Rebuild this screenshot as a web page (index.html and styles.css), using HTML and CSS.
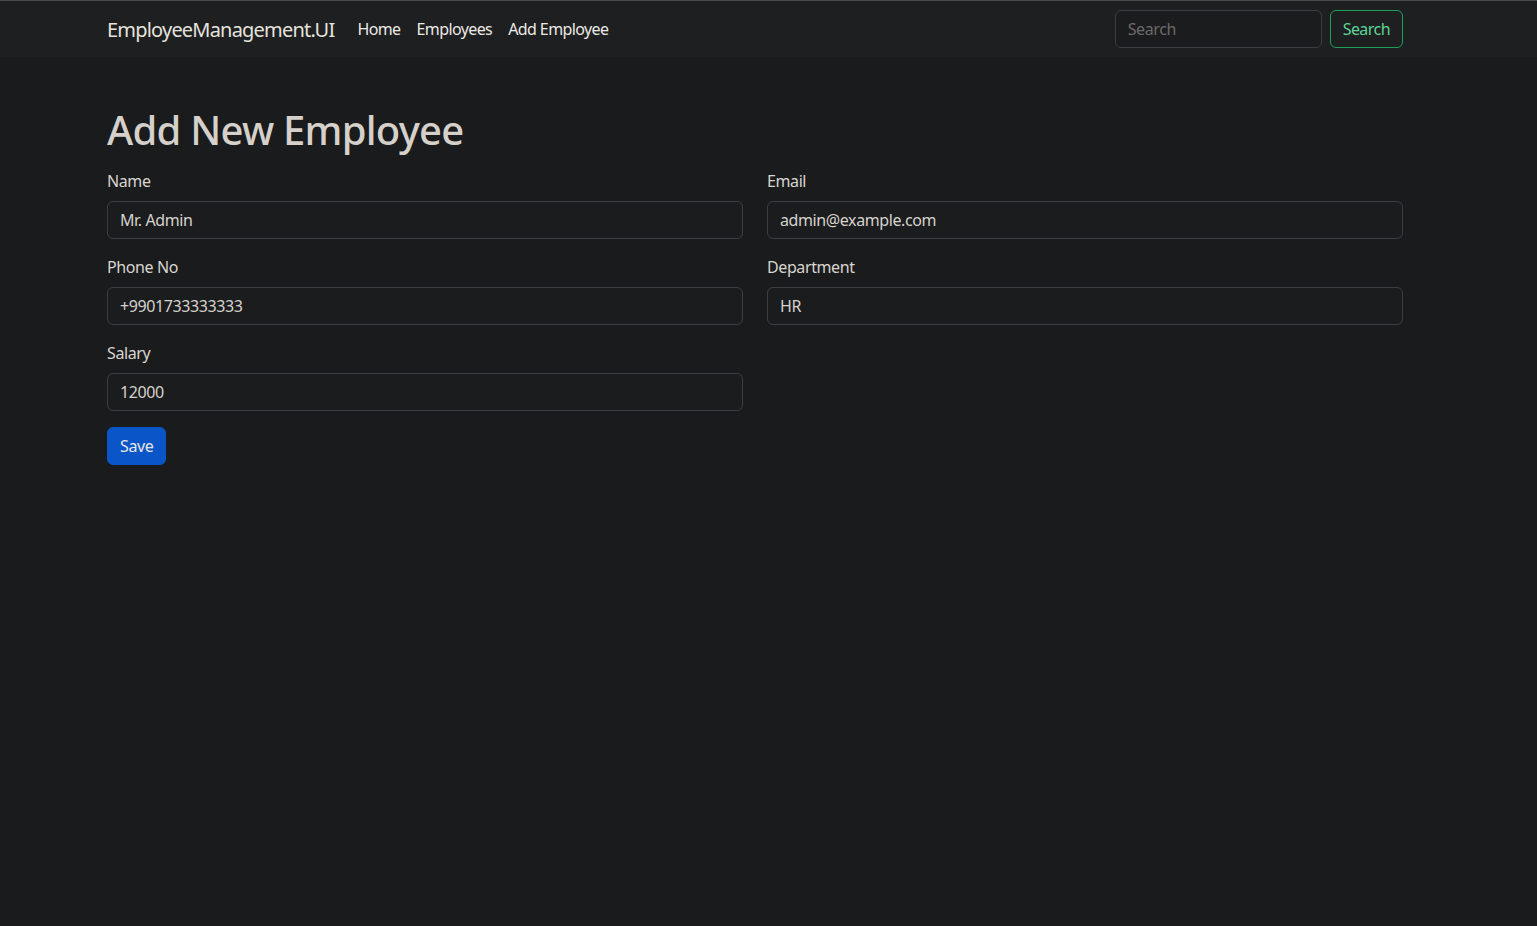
FILE: index.html
```html
<!DOCTYPE html>
<html lang="en">
<head>
<meta charset="utf-8">
<title>EmployeeManagement.UI</title>
<link rel="stylesheet" href="styles.css">
</head>
<body>
<nav class="navbar">
  <div class="nav-inner">
    <a class="brand" href="#">EmployeeManagement.UI</a>
    <ul class="nav-links">
      <li><a href="#">Home</a></li>
      <li><a href="#">Employees</a></li>
      <li><a href="#">Add Employee</a></li>
    </ul>
    <form class="search">
      <input class="search-input" type="search" placeholder="Search">
      <button class="btn-search" type="button">Search</button>
    </form>
  </div>
</nav>
<main class="container">
  <h1 class="title">Add New Employee</h1>
  <form class="emp-form">
    <div class="grid">
      <div class="field">
        <label class="label">Name</label>
        <input class="input" type="text" value="Mr. Admin">
      </div>
      <div class="field">
        <label class="label">Email</label>
        <input class="input" type="text" value="admin@example.com">
      </div>
      <div class="field">
        <label class="label">Phone No</label>
        <input class="input" type="text" value="+9901733333333">
      </div>
      <div class="field">
        <label class="label">Department</label>
        <input class="input" type="text" value="HR">
      </div>
      <div class="field">
        <label class="label">Salary</label>
        <input class="input" type="text" value="12000">
      </div>
    </div>
    <button class="btn-save" type="button">Save</button>
  </form>
</main>
</body>
</html>
```
FILE: styles.css
```css
* { box-sizing: border-box; }
html, body { margin: 0; padding: 0; }
body {
  background: #1a1b1d;
  color: #d9d5cf;
  font-family: "Segoe UI", "Noto Sans", "Open Sans", sans-serif;
  font-size: 16px;
  line-height: 1.5;
  letter-spacing: -0.4px;
  border-top: 1px solid #4a4a4b;
  min-height: 926px;
}
a { text-decoration: none; color: inherit; }

.navbar {
  background: #1e1f21;
  height: 56px;
}
.nav-inner {
  display: flex;
  align-items: center;
  height: 100%;
  padding: 0 134px 0 107px;
}
.brand {
  font-size: 20px;
  letter-spacing: -0.8px;
  color: #e6e3de;
  margin-right: 23px;
  line-height: 30px;
  padding-top: 2px;
}
.nav-links {
  display: flex;
  list-style: none;
  margin: 0;
  padding: 0;
  gap: 16px;
}
.nav-links a {
  color: #ece9e4;
  font-size: 16px;
  letter-spacing: -0.6px;
}
.search {
  margin-left: auto;
  display: flex;
  gap: 8px;
}
.search-input {
  width: 207px;
  height: 38px;
  background: #1b1c1e;
  border: 1px solid #3b3f42;
  border-radius: 6px;
  padding: 6px 12px;
  font: inherit;
  letter-spacing: inherit;
  color: #d3cfc9;
  outline: none;
}
.search-input::placeholder { color: #6b6a68; }
.btn-search {
  height: 38px;
  padding: 6px 12px;
  background: transparent;
  border: 1px solid #1d9c5b;
  border-radius: 6px;
  color: #5fd496;
  font: inherit;
  letter-spacing: -0.55px;
}

.container {
  padding: 49px 134px 0 107px;
}
.title {
  margin: 0 0 15px;
  font-size: 40px;
  font-weight: 500;
  line-height: 1.2;
  letter-spacing: -0.75px;
  color: #d5d0c9;
}
.grid {
  display: grid;
  grid-template-columns: 636px 636px;
  column-gap: 24px;
}
.field {
  margin-bottom: 16px;
}
.label {
  display: block;
  margin-bottom: 8px;
  color: #d9d5cf;
}
.input {
  display: block;
  width: 100%;
  height: 38px;
  padding: 6px 12px;
  background: #1b1c1e;
  border: 1px solid #3b3f42;
  border-radius: 6px;
  color: #d6d2cc;
  font: inherit;
  letter-spacing: inherit;
  outline: none;
}
.btn-save {
  height: 38px;
  padding: 6px 12px;
  background: #0a56c8;
  border: 1px solid #0a56c8;
  border-radius: 6px;
  color: #e8e6e3;
  font: inherit;
  letter-spacing: inherit;
}
```
